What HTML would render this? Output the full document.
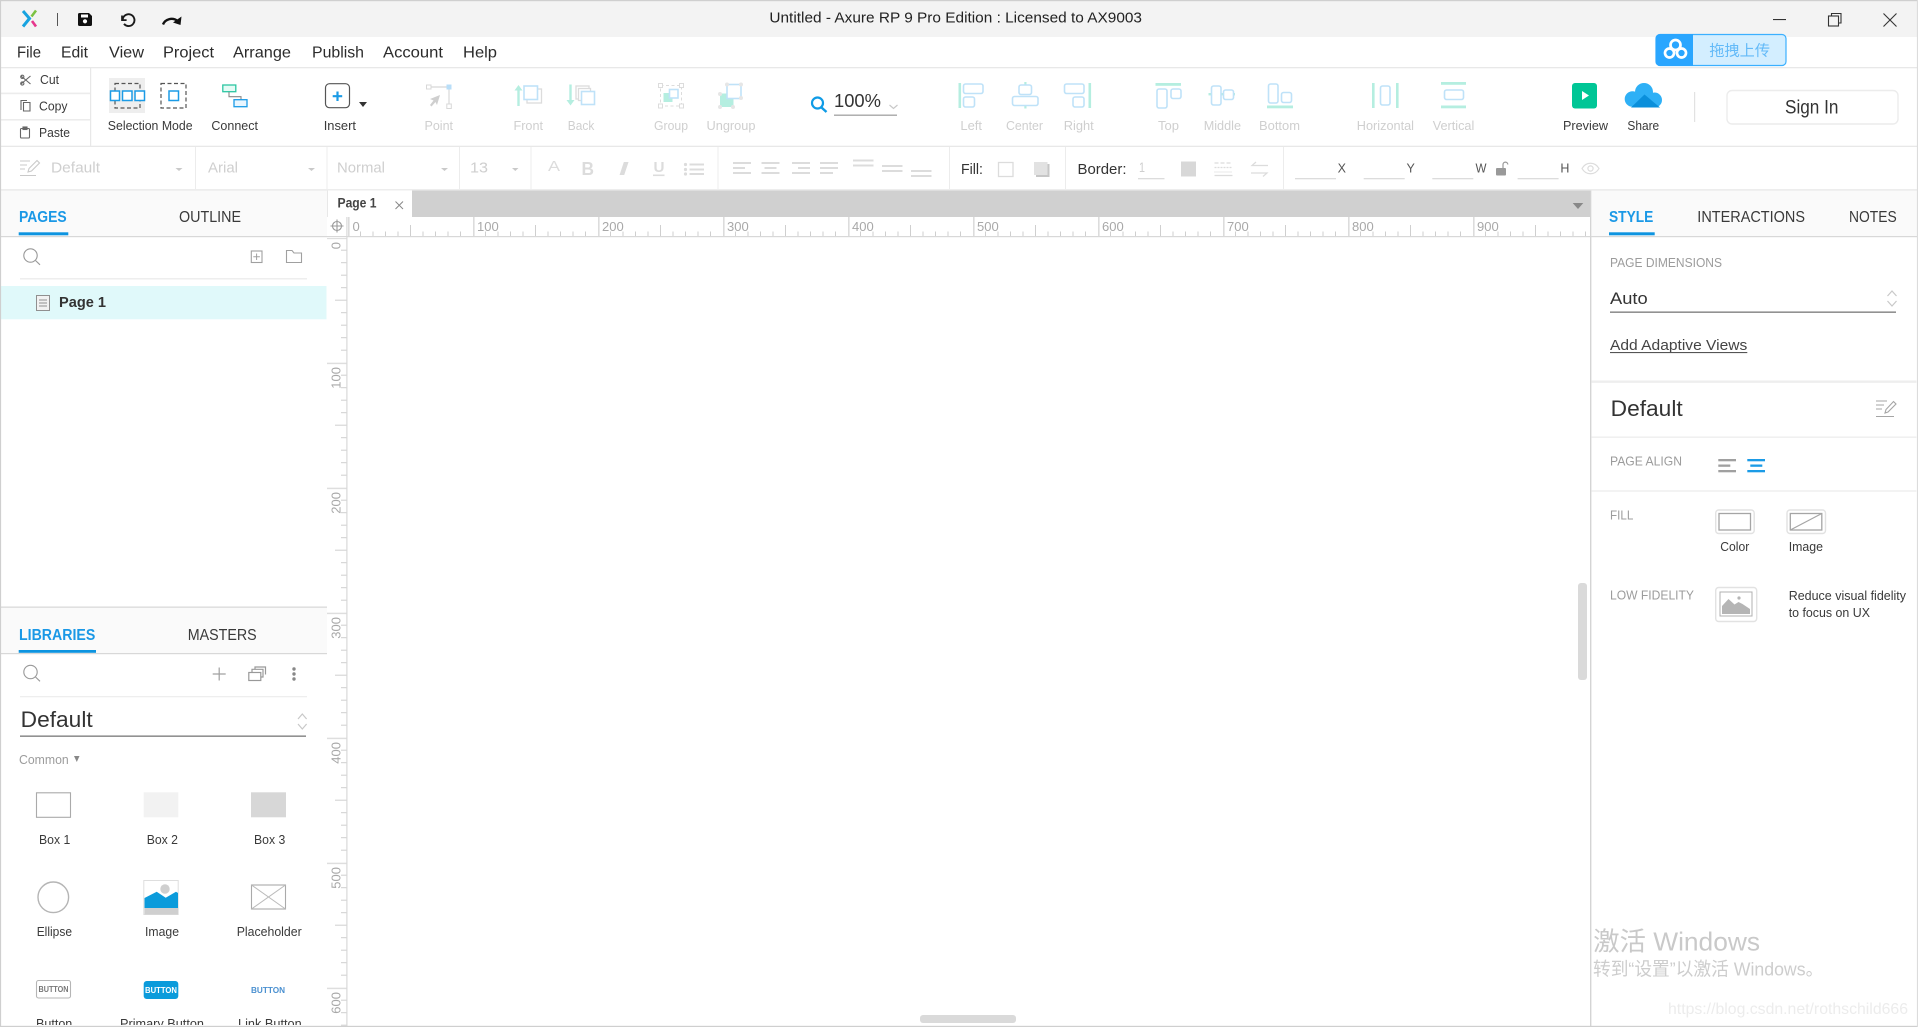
<!DOCTYPE html>
<html lang="en"><head><meta charset="utf-8"><title>Untitled - Axure RP 9 Pro Edition</title>
<style>
html,body{margin:0;padding:0;background:#fff;width:1918px;height:1027px;overflow:hidden}
svg{display:block;font-family:"Liberation Sans","Noto Sans CJK SC",sans-serif}
.t{fill:#3a3a3a;font-size:13px}
.d{fill:#cfcfcf;font-size:13px}
.m{fill:#2b2b2b;font-size:16px}
.tab{fill:#3a3a3a;font-size:15.5px}
.tabA{fill:#1a98e6;font-size:15.5px;font-weight:bold}
.h{fill:#9c9c9c;font-size:13px}
.r{fill:#a8a8a8;font-size:13px}
.f{fill:#cfcfcf;font-size:15px}
.ib{stroke:#bfe2f8;stroke-width:1.6;fill:none}
.ibw{stroke:#bfe2f8;stroke-width:1.6;fill:#fff}
.mi{fill:#b5eee0}
.bb{stroke:#1b9be6;stroke-width:1.5;fill:none}
.bbw{stroke:#1b9be6;stroke-width:1.5;fill:#fff}
</style></head><body>
<svg width="1918" height="1027" viewBox="0 0 1918 1027" xmlns="http://www.w3.org/2000/svg">
<defs>
<pattern id="rh" patternUnits="userSpaceOnUse" x="348" y="217" width="125" height="19">
<rect x="0" y="0" width="1.6" height="19" fill="#dcdcdc"/>
<rect x="12" y="14.5" width="1" height="4.5" fill="#cfcfcf"/><rect x="24.5" y="14.5" width="1" height="4.5" fill="#cfcfcf"/><rect x="37" y="14.5" width="1" height="4.5" fill="#cfcfcf"/><rect x="49.5" y="14.5" width="1" height="4.5" fill="#cfcfcf"/>
<rect x="62" y="8" width="1" height="11" fill="#cfcfcf"/>
<rect x="74.5" y="14.5" width="1" height="4.5" fill="#cfcfcf"/><rect x="87" y="14.5" width="1" height="4.5" fill="#cfcfcf"/><rect x="99.5" y="14.5" width="1" height="4.5" fill="#cfcfcf"/><rect x="112" y="14.5" width="1" height="4.5" fill="#cfcfcf"/>
</pattern>
<pattern id="rv" patternUnits="userSpaceOnUse" x="327" y="237.7" width="20" height="125">
<rect x="0" y="0" width="20" height="1.4" fill="#dcdcdc"/>
<rect x="14" y="12" width="6" height="1" fill="#cfcfcf"/><rect x="14" y="24.5" width="6" height="1" fill="#cfcfcf"/><rect x="14" y="37" width="6" height="1" fill="#cfcfcf"/><rect x="14" y="49.5" width="6" height="1" fill="#cfcfcf"/>
<rect x="8" y="62" width="12" height="1" fill="#cfcfcf"/>
<rect x="14" y="74.5" width="6" height="1" fill="#cfcfcf"/><rect x="14" y="87" width="6" height="1" fill="#cfcfcf"/><rect x="14" y="99.5" width="6" height="1" fill="#cfcfcf"/><rect x="14" y="112" width="6" height="1" fill="#cfcfcf"/>
</pattern>
<clipPath id="bot"><rect x="0" y="0" width="327" height="1025"/></clipPath>
<clipPath id="cl"><rect x="1620" y="78" width="50" height="29.5"/></clipPath>
</defs>

<rect width="1918" height="1027" fill="#fff"/>

<!-- title bar -->
<rect x="0" y="0" width="1918" height="37" fill="#f3f3f3"/>
<polyline points="23,11 29.5,18.5 23,26.5" fill="none" stroke="#17a3e0" stroke-width="3"/>
<line x1="36" y1="10.5" x2="31.5" y2="16.5" stroke="#7cc243" stroke-width="2.6"/>
<line x1="32" y1="21" x2="36" y2="26.5" stroke="#e6368c" stroke-width="2.6"/>
<rect x="57" y="13" width="1" height="13" fill="#555"/>
<path d="M78 14.5a1.5 1.5 0 0 1 1.5-1.5H89l3 3v8.5a1.5 1.5 0 0 1-1.5 1.5h-11a1.5 1.5 0 0 1-1.5-1.5z" fill="#111"/>
<rect x="81" y="14.5" width="7" height="3" fill="#fff"/><circle cx="85" cy="21.3" r="2.1" fill="#fff"/>
<path d="M122 15.500v4.600h4.600" fill="none" stroke="#1a1a1a" stroke-width="1.700"/>
<path d="M122.700 19.500a5.900 5.900 0 1 1 1.300 4.400" fill="none" stroke="#1a1a1a" stroke-width="1.900"/>
<path d="M163 24.500c2-5 9-8 15-3.200" fill="none" stroke="#111" stroke-width="2.400"/>
<path d="M181.500 16.500l-1 8.500-7.500-2.500z" fill="#111"/>
<text x="769.400" y="22.500" font-size="15" fill="#222" textLength="372.600" lengthAdjust="spacingAndGlyphs">Untitled - Axure RP 9 Pro Edition : Licensed to AX9003</text>
<rect x="1773" y="19" width="13" height="1.100" fill="#333"/>
<rect x="1828.500" y="16" width="10" height="10" fill="none" stroke="#333" stroke-width="1.100"/>
<path d="M1831.500 16v-2.500h9.500v9.500h-2.500" fill="none" stroke="#333" stroke-width="1.100"/>
<path d="M1883.500 13.500l13 13M1896.500 13.500l-13 13" stroke="#333" stroke-width="1.100"/>

<!-- menu -->
<text x="17" y="57.500" class="m" textLength="24" lengthAdjust="spacingAndGlyphs">File</text>
<text x="61" y="57.500" class="m" textLength="27" lengthAdjust="spacingAndGlyphs">Edit</text>
<text x="109" y="57.500" class="m" textLength="35" lengthAdjust="spacingAndGlyphs">View</text>
<text x="163" y="57.500" class="m" textLength="51" lengthAdjust="spacingAndGlyphs">Project</text>
<text x="233" y="57.500" class="m" textLength="58" lengthAdjust="spacingAndGlyphs">Arrange</text>
<text x="312" y="57.500" class="m" textLength="52" lengthAdjust="spacingAndGlyphs">Publish</text>
<text x="383" y="57.500" class="m" textLength="60" lengthAdjust="spacingAndGlyphs">Account</text>
<text x="463" y="57.500" class="m" textLength="34" lengthAdjust="spacingAndGlyphs">Help</text>
<rect x="0" y="67" width="1918" height="1.300" fill="#e8e8e8"/>

<!-- baidu widget -->
<rect x="1656" y="34.500" width="130" height="31" rx="4" fill="#d3eeff" stroke="#3bb0ff" stroke-width="1.200"/>
<path d="M1660 34h33v32h-33a4.500 4.500 0 0 1-4.500-4.500v-23a4.500 4.500 0 0 1 4.500-4.500z" fill="#2aa6ff"/>
<g fill="none" stroke="#fff" stroke-width="2.700"><circle cx="1675.500" cy="45" r="5"/><circle cx="1669.500" cy="53" r="4.500"/><circle cx="1681.500" cy="53" r="4.500"/></g>
<text x="1709.400" y="55.500" font-size="15" fill="#63baf8" textLength="60.600" lengthAdjust="spacingAndGlyphs">拖拽上传</text>

<!-- toolbar: clipboard -->
<rect x="90" y="68" width="1.200" height="78" fill="#e8e8e8"/>
<rect x="0" y="92.600" width="90" height="1.600" fill="#ececec"/>
<rect x="0" y="119" width="90" height="1.600" fill="#ececec"/>
<g fill="none" stroke="#666" stroke-width="1.100">
<path d="M21 76l9.500 8M30.500 76l-9.500 8"/><circle cx="22.300" cy="76.800" r="1.600"/><circle cx="22.300" cy="83.500" r="1.600"/>
<path d="M21 110v-9.500h6M23.500 102.500h6.500v8.500h-6.500z"/>
<rect x="20.500" y="128.500" width="9" height="9.500" rx="1"/><rect x="23" y="127" width="4" height="2.500" fill="#666"/>
</g>
<text x="40" y="84" class="t" textLength="19" lengthAdjust="spacingAndGlyphs">Cut</text>
<text x="39" y="110.500" class="t" textLength="28.500" lengthAdjust="spacingAndGlyphs">Copy</text>
<text x="39" y="137" class="t" textLength="31" lengthAdjust="spacingAndGlyphs">Paste</text>

<!-- selection mode -->
<rect x="109" y="78" width="36" height="35" fill="#eeeeee"/>
<rect x="115" y="83.500" width="25" height="24.500" fill="none" stroke="#555" stroke-width="1.200" stroke-dasharray="4 2.500"/>
<rect x="110.500" y="91" width="9" height="9.500" class="bbw"/>
<rect x="122.500" y="91" width="9.500" height="9.500" class="bbw"/>
<rect x="135" y="91" width="9.500" height="9.500" class="bbw"/>
<rect x="161" y="83.500" width="25" height="24.500" fill="none" stroke="#555" stroke-width="1.200" stroke-dasharray="4 2.500"/>
<rect x="169" y="91" width="9.500" height="9.500" class="bb"/>
<text x="107.800" y="130" class="t" textLength="84.800" lengthAdjust="spacingAndGlyphs">Selection Mode</text>
<!-- connect -->
<rect x="222.800" y="85" width="13" height="6.700" fill="#e5fbf5" stroke="#2cc6a2" stroke-width="1.300"/>
<path d="M229 92v4.700h12v3" fill="none" stroke="#888" stroke-width="1.100"/>
<rect x="234" y="99.700" width="13" height="7" fill="#e9f6ff" stroke="#1b9be6" stroke-width="1.300"/>
<text x="211.400" y="130" class="t" textLength="46.600" lengthAdjust="spacingAndGlyphs">Connect</text>
<!-- insert -->
<rect x="325.500" y="83.700" width="24" height="24" rx="4" fill="#fff" stroke="#555" stroke-width="1.200"/>
<path d="M337.500 91.500v9.500M332.700 96.200h9.500" stroke="#1b9be6" stroke-width="2.200"/>
<path d="M359 102h8l-4 5z" fill="#333"/>
<text x="323.700" y="130" class="t" textLength="32.300" lengthAdjust="spacingAndGlyphs">Insert</text>

<!-- point -->
<path d="M428.500 87h20.500v19" fill="none" stroke="#d8d8d8" stroke-width="1.200"/>
<rect x="426.500" y="85" width="4.500" height="4" fill="#fff" stroke="#d8d8d8"/>
<rect x="446.500" y="84.500" width="5" height="5" fill="#b8def8"/>
<rect x="446.800" y="104" width="4.500" height="4.500" fill="#fff" stroke="#d8d8d8"/>
<path d="M440 95l-10 4 3.500 1.500-3.500 4.500 1.500 1.500 4-4.500 1.500 3z" fill="#cfcfcf"/>
<text x="424.500" y="130" class="d" textLength="28.500" lengthAdjust="spacingAndGlyphs">Point</text>

<!-- front / back -->
<path d="M518.500 106V88" stroke="#b5eee0" stroke-width="2.400"/><path d="M514.500 90.500l4-5.500 4 5.500z" class="mi"/>
<rect x="527" y="89" width="14.500" height="14" fill="#fff" stroke="#dcdcdc" stroke-width="1.300"/>
<rect x="524" y="86" width="13.500" height="13.500" class="ibw"/>
<path d="M570.500 84.500V102" stroke="#b5eee0" stroke-width="2.400"/><path d="M566.500 100l4 5.500 4-5.500z" class="mi"/>
<rect x="576" y="86" width="13" height="13" fill="#fff" stroke="#dcdcdc" stroke-width="1.300"/>
<rect x="578.500" y="88.500" width="12" height="12" fill="#fff" stroke="#dcdcdc" stroke-width="1.300"/>
<rect x="581.500" y="91.500" width="13" height="13" class="ibw"/>
<text x="513.500" y="130" class="d" textLength="29.500" lengthAdjust="spacingAndGlyphs">Front</text>
<text x="567.800" y="130" class="d" textLength="26.500" lengthAdjust="spacingAndGlyphs">Back</text>

<!-- group -->
<rect x="660.500" y="85.500" width="21" height="20.500" fill="none" stroke="#dcdcdc" stroke-width="1" stroke-dasharray="3 2.500"/>
<g fill="#fff" stroke="#dcdcdc"><rect x="658.500" y="83.500" width="4" height="4"/><rect x="679.500" y="83.500" width="4" height="4"/><rect x="658.500" y="104" width="4" height="4"/><rect x="679.500" y="104" width="4" height="4"/></g>
<rect x="663.500" y="93" width="9" height="9" class="mi"/>
<rect x="669.500" y="89.500" width="8.500" height="8.500" class="ibw"/>
<text x="654" y="130" class="d" textLength="34" lengthAdjust="spacingAndGlyphs">Group</text>
<!-- ungroup -->
<rect x="720" y="93.500" width="13.500" height="13.500" class="mi"/>
<rect x="727" y="84.500" width="14" height="14" class="ibw"/>
<g fill="#e6e6e6"><circle cx="741" cy="84.500" r="2"/><circle cx="741" cy="98" r="2"/><circle cx="727" cy="84.500" r="2"/><circle cx="720" cy="94" r="2"/><circle cx="720" cy="107" r="2"/><circle cx="733" cy="107" r="2"/></g>
<text x="706.500" y="130" class="d" textLength="49" lengthAdjust="spacingAndGlyphs">Ungroup</text>

<!-- zoom -->
<circle cx="817.500" cy="103" r="5.500" fill="none" stroke="#0f9be6" stroke-width="2.200"/>
<path d="M821.500 107.500l5 4.500" stroke="#0f9be6" stroke-width="2.400"/>
<text x="834" y="107" font-size="18" fill="#333" textLength="47" lengthAdjust="spacingAndGlyphs">100%</text>
<rect x="834" y="114.500" width="63" height="1.400" fill="#a8a8a8"/>
<path d="M889.500 105l4 3.500 4-3.500" fill="none" stroke="#c8c8c8" stroke-width="1.200"/>

<!-- align icons -->
<rect x="958.500" y="83" width="2.600" height="25" class="mi"/>
<rect x="963.500" y="84" width="19.500" height="9.500" rx="2" class="ib"/><rect x="963.500" y="97" width="11" height="10" rx="2" class="ib"/>
<text x="960.400" y="130" class="d" textLength="21.600" lengthAdjust="spacingAndGlyphs">Left</text>

<rect x="1024.300" y="82" width="2.200" height="3" class="mi"/><rect x="1024.300" y="105" width="2.200" height="3.500" class="mi"/>
<rect x="1019" y="85" width="12.500" height="9.500" rx="2" class="ib"/><rect x="1012.500" y="96.500" width="25.500" height="9" rx="2" class="ib"/>
<text x="1006" y="130" class="d" textLength="37" lengthAdjust="spacingAndGlyphs">Center</text>

<rect x="1088.500" y="83" width="2.600" height="25" class="mi"/>
<rect x="1064.500" y="84" width="19.500" height="9.500" rx="2" class="ib"/><rect x="1073" y="97" width="11" height="10" rx="2" class="ib"/>
<text x="1063.700" y="130" class="d" textLength="30" lengthAdjust="spacingAndGlyphs">Right</text>

<rect x="1155.500" y="83" width="25.500" height="2.800" class="mi"/>
<rect x="1157" y="89" width="10" height="19" rx="2" class="ib"/><rect x="1171" y="89" width="10" height="9.500" rx="2" class="ib"/>
<text x="1158" y="130" class="d" textLength="21" lengthAdjust="spacingAndGlyphs">Top</text>

<rect x="1208.500" y="93" width="26.500" height="2.400" class="mi"/>
<rect x="1211.500" y="86" width="9.500" height="19" rx="2" class="ibw"/><rect x="1223.500" y="90" width="10" height="9.500" rx="2" class="ibw"/>
<text x="1203.700" y="130" class="d" textLength="37.300" lengthAdjust="spacingAndGlyphs">Middle</text>

<rect x="1267" y="105.500" width="26" height="2.800" class="mi"/>
<rect x="1268.500" y="84" width="9.500" height="19" rx="2" class="ib"/><rect x="1281.500" y="92.500" width="10" height="10" rx="2" class="ib"/>
<text x="1259" y="130" class="d" textLength="41" lengthAdjust="spacingAndGlyphs">Bottom</text>

<rect x="1372" y="83" width="2.600" height="25" class="mi"/><rect x="1396" y="83" width="2.600" height="25" class="mi"/>
<rect x="1380.500" y="86" width="9.500" height="19" rx="2" class="ib"/>
<text x="1356.800" y="130" class="d" textLength="57.200" lengthAdjust="spacingAndGlyphs">Horizontal</text>

<rect x="1441" y="82" width="25" height="2.800" class="mi"/><rect x="1441" y="105.500" width="25" height="2.800" class="mi"/>
<rect x="1444.500" y="90" width="19" height="9.500" rx="2" class="ib"/>
<text x="1432.700" y="130" class="d" textLength="41.600" lengthAdjust="spacingAndGlyphs">Vertical</text>

<!-- preview / share -->
<rect x="1572" y="83" width="25" height="25.500" rx="3" fill="#00c696"/>
<path d="M1582 91v9l7-4.500z" fill="#fff"/>
<text x="1563" y="130" class="t" textLength="45" lengthAdjust="spacingAndGlyphs">Preview</text>
<g clip-path="url(#cl)">
<circle cx="1632.500" cy="99" r="7.800" fill="#2eb0f6"/><circle cx="1644" cy="92" r="9" fill="#2eb0f6"/><circle cx="1654.500" cy="100" r="7.500" fill="#2eb0f6"/><rect x="1632" y="97" width="22" height="11" fill="#2eb0f6"/>
<path d="M1631 107.500l13.500-13 15.500 13z" fill="#0a8fdb"/>
</g>
<text x="1627.400" y="130" class="t" textLength="31.800" lengthAdjust="spacingAndGlyphs">Share</text>
<rect x="1694" y="92" width="1.200" height="30" fill="#e2e2e2"/>
<rect x="1727" y="90.500" width="171" height="33.500" rx="5" fill="#fff" stroke="#ececec" stroke-width="1.400"/>
<text x="1785" y="113.500" font-size="19" fill="#333" textLength="53.400" lengthAdjust="spacingAndGlyphs">Sign In</text>

<rect x="0" y="145.700" width="1918" height="1.300" fill="#e8e8e8"/>

<!-- format bar -->
<g fill="#ececec">
<rect x="195" y="147" width="1" height="43"/><rect x="326.500" y="147" width="1" height="43"/><rect x="459" y="147" width="1" height="43"/><rect x="530.500" y="147" width="1" height="43"/><rect x="717.500" y="147" width="1" height="43"/><rect x="949" y="147" width="1" height="43"/><rect x="1065" y="147" width="1" height="43"/><rect x="1283" y="147" width="1" height="43"/>
</g>
<g fill="none" stroke="#c9c9c9" stroke-width="1.100">
<path d="M20 161h10M20 165h7M20 169h5M20 175.500h16"/>
<path d="M28 172l1-3.500 8-8 2.500 2.500-8 8z"/>
</g>
<text x="51" y="172.500" class="f" textLength="49" lengthAdjust="spacingAndGlyphs">Default</text>
<text x="208" y="172.500" class="f" textLength="30" lengthAdjust="spacingAndGlyphs">Arial</text>
<text x="337" y="172.500" class="f" textLength="48" lengthAdjust="spacingAndGlyphs">Normal</text>
<text x="470" y="172.500" class="f" textLength="18" lengthAdjust="spacingAndGlyphs">13</text>
<g fill="#c9c9c9">
<path d="M175.500 168h7l-3.500 3z"/><path d="M308 168h7l-3.500 3z"/><path d="M441 168h7l-3.500 3z"/><path d="M512 168h6.500l-3.200 3z"/>
</g>
<text x="548" y="171" font-size="15" fill="#dcdcdc" textLength="12" lengthAdjust="spacingAndGlyphs">A</text>
<text x="581.500" y="175" font-size="18" font-weight="bold" fill="#dcdcdc" textLength="12.500" lengthAdjust="spacingAndGlyphs">B</text>
<text x="619" y="175" font-size="18" font-weight="bold" font-style="italic" fill="#dcdcdc" textLength="9" lengthAdjust="spacingAndGlyphs">I</text>
<text x="653.500" y="172" font-size="15" font-weight="bold" fill="#dcdcdc" textLength="11" lengthAdjust="spacingAndGlyphs">U</text>
<rect x="653" y="174.500" width="11.500" height="1.600" fill="#dcdcdc"/>
<g fill="#dcdcdc">
<circle cx="685.500" cy="164.500" r="1.600"/><circle cx="685.500" cy="169.500" r="1.600"/><circle cx="685.500" cy="174" r="1.600"/>
<rect x="689.500" y="163.500" width="14.500" height="2"/><rect x="689.500" y="168.500" width="14.500" height="2"/><rect x="689.500" y="173" width="14.500" height="2"/>
<rect x="733" y="162" width="18" height="2"/><rect x="733" y="167" width="12" height="2"/><rect x="733" y="172" width="18" height="2"/>
<rect x="761.500" y="162" width="18" height="2"/><rect x="764.500" y="167" width="12" height="2"/><rect x="761.500" y="172" width="18" height="2"/>
<rect x="792" y="162" width="18" height="2"/><rect x="798" y="167" width="12" height="2"/><rect x="792" y="172" width="18" height="2"/>
<rect x="820" y="162" width="18" height="2"/><rect x="820" y="167" width="18" height="2"/><rect x="820" y="172" width="13" height="2"/>
<rect x="853" y="159.500" width="20.500" height="2"/><rect x="853" y="164.500" width="20.500" height="2"/>
<rect x="882" y="165" width="20.500" height="2"/><rect x="882" y="170" width="20.500" height="2"/>
<rect x="911" y="170" width="20.500" height="2"/><rect x="911" y="175" width="20.500" height="2"/>
</g>
<text x="961" y="174" font-size="14.500" fill="#333" textLength="22" lengthAdjust="spacingAndGlyphs">Fill:</text>
<rect x="998.500" y="162.500" width="14.500" height="14" fill="#fff" stroke="#dcdcdc" stroke-width="1.300"/>
<rect x="1036" y="164" width="13.500" height="13" fill="#c6c6c6"/><rect x="1034" y="162" width="13.500" height="13" fill="#e2e2e2"/>
<text x="1077.500" y="174" font-size="14.500" fill="#333" textLength="49" lengthAdjust="spacingAndGlyphs">Border:</text>
<text x="1139" y="172" font-size="14" fill="#cfcfcf" textLength="6" lengthAdjust="spacingAndGlyphs">1</text>
<rect x="1138" y="178" width="26.500" height="1.300" fill="#dcdcdc"/>
<rect x="1181" y="161.500" width="15" height="15" fill="#d8d8d8"/>
<g stroke="#dcdcdc" stroke-width="1.200" fill="none">
<path d="M1214.500 163h18" stroke-dasharray="4 2"/><path d="M1214.500 167.500h18" stroke-dasharray="2 1"/><path d="M1214.500 172h18" stroke-dasharray="1 1"/><path d="M1214.500 175.500h18"/>
<path d="M1268 165.500h-16l4-3.500M1251 173h16l-4 3.500"/>
</g>
<g fill="#dcdcdc">
<rect x="1295" y="178" width="41" height="1.300"/><rect x="1363.700" y="178" width="41" height="1.300"/><rect x="1432.300" y="178" width="41" height="1.300"/><rect x="1517.600" y="178" width="41" height="1.300"/>
</g>
<text x="1337.600" y="172.500" font-size="12.500" fill="#555">X</text>
<text x="1406.500" y="172.500" font-size="12.500" fill="#555">Y</text>
<text x="1475.500" y="172.500" font-size="12.500" fill="#555" textLength="11" lengthAdjust="spacingAndGlyphs">W</text>
<text x="1560.400" y="172.500" font-size="12.500" fill="#555">H</text>
<rect x="1496" y="168" width="10" height="7.500" rx="1" fill="#999"/>
<path d="M1503 168v-3.500a2.400 2.400 0 0 1 4.800 0" fill="none" stroke="#999" stroke-width="1.200"/>
<path d="M1582 168.500c4-7 13-7 17 0-4 7-13 7-17 0z" fill="none" stroke="#dcdcdc" stroke-width="1.200"/><circle cx="1590.500" cy="168.500" r="2.600" fill="none" stroke="#dcdcdc" stroke-width="1.200"/>

<rect x="0" y="189" width="1918" height="1.800" fill="#ededed"/>

<!-- left top panel -->
<rect x="1" y="191" width="326" height="45" fill="#fafafa"/>
<text x="19" y="222" class="tabA" textLength="47.700" lengthAdjust="spacingAndGlyphs">PAGES</text>
<rect x="18.700" y="232.300" width="49.600" height="3" fill="#0d94e0"/>
<text x="179" y="222" class="tab" textLength="62" lengthAdjust="spacingAndGlyphs">OUTLINE</text>
<rect x="0" y="236" width="327" height="1.200" fill="#d8d8d8"/>
<circle cx="30.500" cy="255.500" r="6.700" fill="none" stroke="#999" stroke-width="1.100"/><path d="M35.500 260.500l4.500 4.300" stroke="#999" stroke-width="1.100"/>
<rect x="251.300" y="251" width="10.700" height="11.500" fill="none" stroke="#a0a0a0" stroke-width="1.100"/><path d="M256.600 253.500v6.500M253.300 256.700h6.600" stroke="#a0a0a0" stroke-width="1"/>
<path d="M286.500 262.500v-12h5.500l2 2.500h7.500v9.500z" fill="none" stroke="#a0a0a0" stroke-width="1.100"/>
<rect x="20" y="278" width="287" height="1.500" fill="#eeeeee"/>
<rect x="1" y="286" width="325.500" height="33.300" fill="#e0f9fa"/>
<rect x="36.500" y="295.500" width="13" height="15" fill="#f2f2f2" stroke="#909090" stroke-width="1"/>
<path d="M39 300h8M39 303h8M39 306h8" stroke="#909090" stroke-width="1"/>
<text x="59" y="307" font-size="14.500" font-weight="bold" fill="#333" textLength="47" lengthAdjust="spacingAndGlyphs">Page 1</text>

<!-- libraries -->
<rect x="0" y="606.500" width="327" height="1.300" fill="#d8d8d8"/>
<rect x="1" y="608" width="326" height="45" fill="#fafafa"/>
<text x="19" y="640" class="tabA" textLength="76.300" lengthAdjust="spacingAndGlyphs">LIBRARIES</text>
<rect x="18.700" y="650" width="77.300" height="2.800" fill="#0d94e0"/>
<text x="187.700" y="640" class="tab" textLength="69" lengthAdjust="spacingAndGlyphs">MASTERS</text>
<rect x="0" y="653" width="327" height="1.200" fill="#d8d8d8"/>
<circle cx="30.500" cy="672" r="6.700" fill="none" stroke="#999" stroke-width="1.100"/><path d="M35.500 677l4.500 4.300" stroke="#999" stroke-width="1.100"/>
<path d="M219.200 667.500v13M212.700 674h13" stroke="#a0a0a0" stroke-width="1.200"/>
<rect x="248.800" y="672.500" width="12" height="8" fill="none" stroke="#999" stroke-width="1.200"/>
<path d="M252 672v-2.700h11v7.700h-2M255 669v-2h10.500v7.500" fill="none" stroke="#999" stroke-width="1.200"/>
<circle cx="294" cy="669" r="1.700" fill="#888"/><circle cx="294" cy="674" r="1.700" fill="#888"/><circle cx="294" cy="679" r="1.700" fill="#888"/>
<rect x="20" y="696" width="287" height="1.300" fill="#eeeeee"/>
<text x="20.700" y="727" font-size="22" fill="#333" textLength="72" lengthAdjust="spacingAndGlyphs">Default</text>
<rect x="20" y="735.500" width="286" height="1.300" fill="#777"/>
<path d="M298 719l4.300-5 4.300 5M298 724l4.300 5 4.300-5" fill="none" stroke="#c8c8c8" stroke-width="1.200"/>
<text x="19" y="764" class="h" textLength="49.700" lengthAdjust="spacingAndGlyphs">Common</text>
<path d="M74 756h5.500l-2.700 6z" fill="#888"/>

<g clip-path="url(#bot)">
<rect x="36.500" y="792.800" width="34" height="24.500" fill="#fff" stroke="#aaa" stroke-width="1.100"/>
<rect x="143.700" y="792.300" width="34.600" height="25" fill="#f2f2f2"/>
<rect x="251" y="792.300" width="35" height="25" fill="#d7d7d7"/>
<text x="39" y="844" class="t" textLength="31.300" lengthAdjust="spacingAndGlyphs">Box 1</text>
<text x="146.700" y="844" class="t" textLength="31.300" lengthAdjust="spacingAndGlyphs">Box 2</text>
<text x="254" y="844" class="t" textLength="31.300" lengthAdjust="spacingAndGlyphs">Box 3</text>

<circle cx="53.300" cy="897.300" r="15.300" fill="#fff" stroke="#b5b5b5" stroke-width="1.400"/>
<rect x="143.800" y="880.500" width="34.400" height="34" fill="#fff" stroke="#dedede"/>
<path d="M144.500 898L156.700 891.700 165.700 897.700 176 891.700 178 893V908H144.500z" fill="#0b9bdb"/>
<rect x="144.500" y="908" width="33.500" height="6.500" fill="#cfcfcf"/>
<circle cx="165" cy="889" r="4.700" fill="#cfcfcf"/>
<rect x="251.500" y="885" width="34" height="24" fill="#fff" stroke="#aaa" stroke-width="1.100"/>
<path d="M251.500 885l34 24M285.500 885l-34 24" stroke="#bbb" stroke-width="1"/>
<text x="36.700" y="936" class="t" textLength="35.300" lengthAdjust="spacingAndGlyphs">Ellipse</text>
<text x="145" y="936" class="t" textLength="34" lengthAdjust="spacingAndGlyphs">Image</text>
<text x="236.700" y="936" class="t" textLength="65" lengthAdjust="spacingAndGlyphs">Placeholder</text>

<rect x="36.500" y="980.500" width="34" height="17.500" rx="2" fill="#fff" stroke="#b5b5b5" stroke-width="1.100"/>
<text x="38.500" y="992" font-size="8.500" font-weight="bold" fill="#777" textLength="30" lengthAdjust="spacingAndGlyphs">BUTTON</text>
<rect x="143.700" y="981" width="34.600" height="18" rx="3" fill="#0b9bdb"/>
<text x="145" y="993" font-size="8.500" font-weight="bold" fill="#fff" textLength="32" lengthAdjust="spacingAndGlyphs">BUTTON</text>
<text x="251" y="993" font-size="8.500" font-weight="bold" fill="#4a90d0" textLength="34" lengthAdjust="spacingAndGlyphs">BUTTON</text>
<text x="36" y="1028" class="t" textLength="36.300" lengthAdjust="spacingAndGlyphs">Button</text>
<text x="120" y="1028" class="t" textLength="84" lengthAdjust="spacingAndGlyphs">Primary Button</text>
<text x="238" y="1028" class="t" textLength="63.700" lengthAdjust="spacingAndGlyphs">Link Button</text>
</g>

<!-- doc tab row -->
<rect x="327" y="190.500" width="1263" height="26.500" fill="#d0d0d0"/>
<rect x="327.500" y="190.500" width="84.500" height="26.500" fill="#fff"/>
<text x="337.500" y="207.300" font-size="13.500" font-weight="bold" fill="#444" textLength="39" lengthAdjust="spacingAndGlyphs">Page 1</text>
<path d="M395.500 201.500l7.500 7.500M403 201.500l-7.500 7.500" stroke="#888" stroke-width="1"/>
<path d="M1572.700 203h10.600l-5.300 6z" fill="#888"/>

<!-- rulers -->
<rect x="327" y="217" width="1263" height="19" fill="#fff"/>
<rect x="348" y="217" width="1242" height="19" fill="url(#rh)"/>
<rect x="327" y="236" width="1263" height="1.200" fill="#d8d8d8"/>
<rect x="327" y="237" width="20" height="790" fill="#fff"/>
<rect x="327" y="237.700" width="20" height="789" fill="url(#rv)"/>
<rect x="346.300" y="217" width="1.200" height="810" fill="#d8d8d8"/>
<circle cx="337" cy="226" r="4.500" fill="none" stroke="#999" stroke-width="1.100"/><path d="M337 219.500v13M330.500 226h13" stroke="#999" stroke-width="1.100"/>
<text x="352.500" y="231" class="r">0</text>
<text x="477" y="231" class="r">100</text>
<text x="602" y="231" class="r">200</text>
<text x="727" y="231" class="r">300</text>
<text x="852" y="231" class="r">400</text>
<text x="977" y="231" class="r">500</text>
<text x="1102" y="231" class="r">600</text>
<text x="1227" y="231" class="r">700</text>
<text x="1352" y="231" class="r">800</text>
<text x="1477" y="231" class="r">900</text>
<g text-anchor="end">
<text transform="translate(340.500,242) rotate(-90)" class="r">0</text>
<text transform="translate(340.500,367) rotate(-90)" class="r">100</text>
<text transform="translate(340.500,492) rotate(-90)" class="r">200</text>
<text transform="translate(340.500,617) rotate(-90)" class="r">300</text>
<text transform="translate(340.500,742) rotate(-90)" class="r">400</text>
<text transform="translate(340.500,867) rotate(-90)" class="r">500</text>
<text transform="translate(340.500,992) rotate(-90)" class="r">600</text>
</g>

<!-- scrollbars -->
<rect x="1578" y="583" width="9" height="97" rx="3" fill="#dadada"/>
<rect x="920" y="1015" width="96" height="8" rx="3" fill="#dadada"/>

<!-- right panel -->
<rect x="1590" y="190.500" width="1.400" height="836" fill="#d4d4d4"/>
<rect x="1591.400" y="191" width="325.600" height="45" fill="#fafafa"/>
<text x="1609" y="222" class="tabA" textLength="44.300" lengthAdjust="spacingAndGlyphs">STYLE</text>
<rect x="1609" y="232.300" width="45.700" height="3" fill="#0d94e0"/>
<text x="1697.300" y="222" class="tab" textLength="107.700" lengthAdjust="spacingAndGlyphs">INTERACTIONS</text>
<text x="1849" y="222" class="tab" textLength="47.700" lengthAdjust="spacingAndGlyphs">NOTES</text>
<rect x="1591" y="236" width="326" height="1.200" fill="#d8d8d8"/>
<text x="1610" y="267" class="h" textLength="112" lengthAdjust="spacingAndGlyphs">PAGE DIMENSIONS</text>
<text x="1610" y="304" font-size="17" fill="#333" textLength="37.700" lengthAdjust="spacingAndGlyphs">Auto</text>
<rect x="1610" y="311.500" width="286" height="1.300" fill="#777"/>
<path d="M1887.500 296l4.500-5 4.500 5M1887.500 301l4.500 5 4.500-5" fill="none" stroke="#c8c8c8" stroke-width="1.200"/>
<text x="1610" y="350" font-size="15" fill="#444" textLength="137.300" lengthAdjust="spacingAndGlyphs">Add Adaptive Views</text>
<rect x="1610" y="352" width="137.300" height="1.100" fill="#555"/>
<rect x="1591.400" y="380.500" width="325" height="2.400" fill="#eeeeee"/>
<text x="1610.700" y="416" font-size="22" fill="#333" textLength="72" lengthAdjust="spacingAndGlyphs">Default</text>
<g fill="none" stroke="#a5a5a5" stroke-width="1.100">
<path d="M1876 401h11M1876 405h8M1876 409h6M1876 416.500h18"/>
<path d="M1885 413l1-3.500 7.500-8 2.500 2.500-8 8z"/>
</g>
<rect x="1591.400" y="436.500" width="325" height="1.400" fill="#eeeeee"/>
<text x="1610" y="465.500" class="h" textLength="72" lengthAdjust="spacingAndGlyphs">PAGE ALIGN</text>
<g fill="#a0a0a0"><rect x="1718.300" y="459" width="17.700" height="2.300"/><rect x="1718.300" y="464.500" width="12" height="2.300"/><rect x="1718.300" y="470" width="17.700" height="2.300"/></g>
<g fill="#1b9be6"><rect x="1747.300" y="459" width="17.700" height="2.300"/><rect x="1750.300" y="464.500" width="12" height="2.300"/><rect x="1747.300" y="470" width="17.700" height="2.300"/></g>
<rect x="1591.400" y="490.300" width="325" height="1.400" fill="#eeeeee"/>
<text x="1610" y="519.500" class="h" textLength="23.300" lengthAdjust="spacingAndGlyphs">FILL</text>
<rect x="1715.700" y="510" width="38.500" height="23.500" rx="3" fill="#fff" stroke="#e2e2e2" stroke-width="1.400"/>
<rect x="1719" y="513.500" width="31.500" height="16.500" fill="#fff" stroke="#a5a5a5" stroke-width="1.300"/>
<rect x="1787" y="510" width="38.500" height="23.500" rx="3" fill="#fff" stroke="#e2e2e2" stroke-width="1.400"/>
<rect x="1790.300" y="513.500" width="31.500" height="16.500" fill="#fff" stroke="#a5a5a5" stroke-width="1.300"/>
<path d="M1790.300 530l31.500-16.500" stroke="#a5a5a5" stroke-width="1.200"/>
<text x="1720.300" y="551" class="t" textLength="29" lengthAdjust="spacingAndGlyphs">Color</text>
<text x="1788.700" y="551" class="t" textLength="34.300" lengthAdjust="spacingAndGlyphs">Image</text>
<text x="1610" y="599.500" class="h" textLength="84" lengthAdjust="spacingAndGlyphs">LOW FIDELITY</text>
<rect x="1715.700" y="587.500" width="41" height="34" rx="3" fill="#fff" stroke="#e2e2e2" stroke-width="1.400"/>
<rect x="1720" y="592" width="32" height="24" fill="#fff" stroke="#b0b0b0" stroke-width="1"/>
<path d="M1722 614v-8l6.500-7 6 5.500 4-2.500 4 2 7.500 5v5z" fill="#b5b5b5"/>
<circle cx="1739" cy="598" r="1.600" fill="#b5b5b5"/>
<text x="1788.700" y="600" class="t" textLength="117.300" lengthAdjust="spacingAndGlyphs">Reduce visual fidelity</text>
<text x="1788.700" y="617" class="t" textLength="81.300" lengthAdjust="spacingAndGlyphs">to focus on UX</text>

<!-- watermark -->
<text x="1593.300" y="950.500" font-size="26" fill="#c9c9c9" textLength="166.700" lengthAdjust="spacingAndGlyphs">激活 Windows</text>
<text x="1593" y="975.500" font-size="18.500" fill="#cdcdcd" textLength="230.300" lengthAdjust="spacingAndGlyphs">转到“设置”以激活 Windows。</text>
<text x="1668" y="1014" font-size="16" fill="#ececec" textLength="240" lengthAdjust="spacingAndGlyphs">https://blog.csdn.net/rothschild666</text>

<!-- window frame -->
<rect x="0" y="0" width="1918" height="1.200" fill="#cfcfcf"/>
<rect x="0" y="0" width="1.100" height="1027" fill="#cfcfcf"/>
<rect x="0" y="1025.800" width="1918" height="1.200" fill="#cfcfcf"/>
<rect x="1916.900" y="0" width="1.100" height="1027" fill="#dcdcdc"/>
</svg>
</body></html>
